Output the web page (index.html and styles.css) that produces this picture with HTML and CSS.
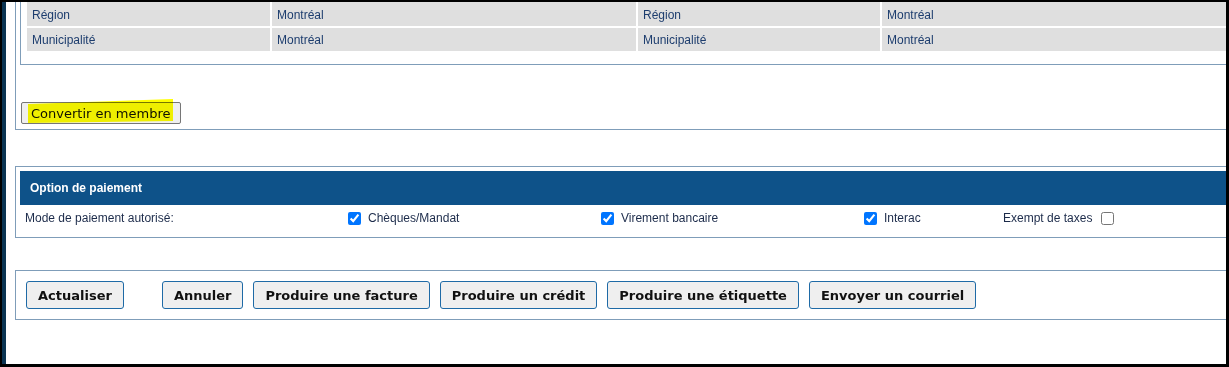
FILE: index.html
```html
<!DOCTYPE html>
<html lang="fr">
<head>
    <meta charset="UTF-8">
    <title>Fiche client</title>
    <link rel="stylesheet" href="styles.css">
</head>
<body>
    <div class="screen">
        <div class="panel panel-top">
            <div class="inner-box">
                <div class="info-grid">
                    <div class="cell">Région</div>
                    <div class="cell">Montréal</div>
                    <div class="cell">Région</div>
                    <div class="cell">Montréal</div>
                    <div class="cell">Municipalité</div>
                    <div class="cell">Montréal</div>
                    <div class="cell">Municipalité</div>
                    <div class="cell">Montréal</div>
                </div>
            </div>
            <button class="btn-convert">Convertir en membre<span class="marker"></span></button>
        </div>

        <div class="panel panel-pay">
            <div class="pay-header">Option de paiement</div>
            <div class="pay-row">
                <div class="pay-label">Mode de paiement autorisé:</div>
                <label class="pay-opt opt-cheque"><input type="checkbox" checked> Chèques/Mandat</label>
                <label class="pay-opt opt-virement"><input type="checkbox" checked> Virement bancaire</label>
                <label class="pay-opt opt-interac"><input type="checkbox" checked> Interac</label>
                <label class="pay-opt opt-exempt">Exempt de taxes <input type="checkbox"></label>
            </div>
        </div>

        <div class="panel panel-actions">
            <button class="btn-action btn-first">Actualiser</button>
            <button class="btn-action">Annuler</button>
            <button class="btn-action">Produire une facture</button>
            <button class="btn-action">Produire un crédit</button>
            <button class="btn-action">Produire une étiquette</button>
            <button class="btn-action">Envoyer un courriel</button>
        </div>
    </div>
</body>
</html>
```

FILE: styles.css
```css
html, body {
    margin: 0;
    background: #000;
}
body {
    height: 367px;
    overflow: hidden;
    font-family: "Liberation Sans", Arial, sans-serif;
    font-size: 12px;
}
.screen {
    margin: 2px 3px 3px 2px;
    height: 362px;
    background: #fff;
    border-left: 4px solid #0b3452;
    overflow: hidden;
}
.panel {
    margin-left: 9px;
    border: 1px solid #7f9db9;
    border-right: 0;
}
.panel-top {
    border-top: 0;
    padding-bottom: 5px;
}
.inner-box {
    margin-left: 4px;
    border-left: 1px solid #7f9db9;
    border-bottom: 1px solid #7f9db9;
    padding: 0 0 13px 6px;
}
.info-grid {
    display: grid;
    grid-template-columns: 243px 364px 242px 1fr;
    grid-auto-rows: 24px 23px;
    gap: 2px;
}
.cell {
    background: #dfdfdf;
    color: #1d3d6e;
    padding: 1px 0 0 5px;
    display: flex;
    align-items: center;
}
.btn-convert {
    position: relative;
    margin: 37px 0 0 5px;
    height: 22px;
    padding: 0 9px;
    font-family: "DejaVu Sans", Verdana, sans-serif;
    font-size: 13px;
    color: #111;
    background: #efefef;
    border: 1px solid #767676;
    border-radius: 2px;
}
.marker {
    position: absolute;
    left: 6px;
    top: -4px;
    width: 145px;
    height: 24px;
    background: #ffff00;
    mix-blend-mode: multiply;
    clip-path: polygon(0 5px, 100% 0, 100% 22px, 0 24px);
}
.panel-pay {
    margin-top: 36px;
    padding-top: 4px;
    padding-left: 4px;
}
.pay-header {
    height: 34px;
    background: #0e5289;
    color: #fff;
    font-weight: bold;
    padding-left: 10px;
    display: flex;
    align-items: center;
}
.pay-row {
    display: flex;
    align-items: center;
    height: 14px;
    padding: 6px 0 12px 5px;
    color: #1c2b4a;
}
.pay-label {
    width: 323px;
}
.pay-opt {
    display: flex;
    align-items: center;
    gap: 7px;
}
.pay-opt input {
    margin: 0;
    width: 13px;
    height: 13px;
}
.opt-cheque {
    width: 253px;
}
.opt-virement {
    width: 263px;
}
.opt-interac {
    width: 139px;
}
.opt-exempt {
    gap: 9px;
}
.panel-actions {
    margin-top: 32px;
    padding: 10px 0 10px 10px;
    display: flex;
    gap: 10px;
}
.btn-action {
    height: 28px;
    padding: 0 11px;
    font-family: "DejaVu Sans", Verdana, sans-serif;
    font-size: 13px;
    font-weight: bold;
    color: #111;
    background: #efefef;
    border: 1px solid #1e6aa6;
    border-radius: 3px;
}
.btn-first {
    margin-right: 28px;
}
```
